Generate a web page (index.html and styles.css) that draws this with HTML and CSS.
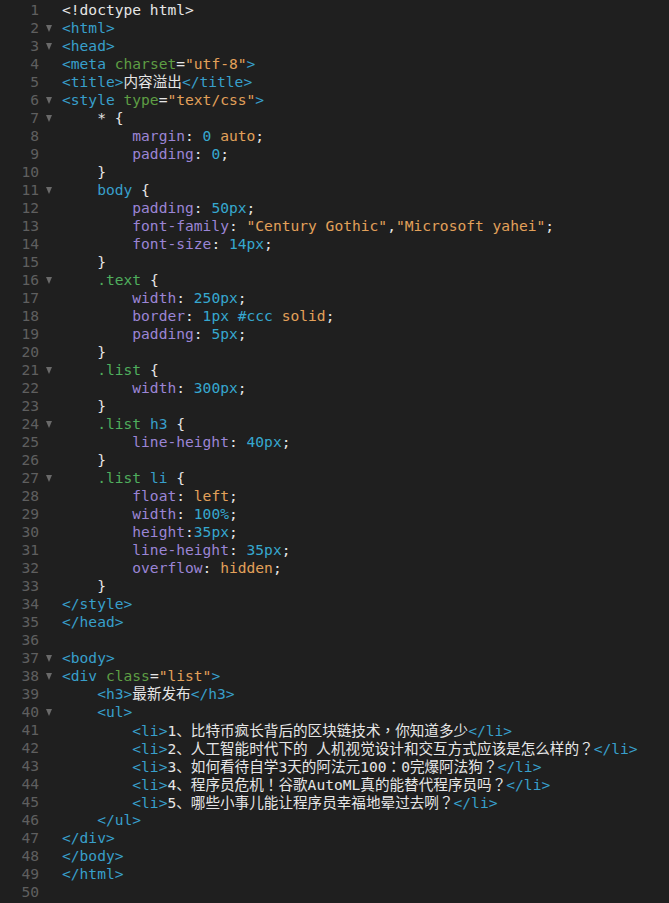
FILE: index.html
```html
<!DOCTYPE html>
<html lang="zh-CN">
<head>
<meta charset="utf-8">
<title>editor</title>
<link rel="stylesheet" href="styles.css">
</head>
<body>
<div class="editor">
<div class="line"><span class="ln">1</span><span class="fold"></span><span class="code">&lt;!doctype html&gt;</span></div>
<div class="line"><span class="ln">2</span><span class="fold on"></span><span class="code"><span class="t">&lt;html&gt;</span></span></div>
<div class="line"><span class="ln">3</span><span class="fold on"></span><span class="code"><span class="t">&lt;head&gt;</span></span></div>
<div class="line"><span class="ln">4</span><span class="fold"></span><span class="code"><span class="t">&lt;meta</span> <span class="a">charset</span>=<span class="s">"utf-8"</span><span class="t">&gt;</span></span></div>
<div class="line"><span class="ln">5</span><span class="fold"></span><span class="code"><span class="t">&lt;title&gt;</span>内容溢出<span class="t">&lt;/title&gt;</span></span></div>
<div class="line"><span class="ln">6</span><span class="fold on"></span><span class="code"><span class="t">&lt;style</span> <span class="a">type</span>=<span class="s">"text/css"</span><span class="t">&gt;</span></span></div>
<div class="line"><span class="ln">7</span><span class="fold on"></span><span class="code">    * {</span></div>
<div class="line"><span class="ln">8</span><span class="fold"></span><span class="code">        <span class="p">margin</span>: <span class="n">0</span> <span class="s">auto</span>;</span></div>
<div class="line"><span class="ln">9</span><span class="fold"></span><span class="code">        <span class="p">padding</span>: <span class="n">0</span>;</span></div>
<div class="line"><span class="ln">10</span><span class="fold"></span><span class="code">    }</span></div>
<div class="line"><span class="ln">11</span><span class="fold on"></span><span class="code">    <span class="t">body</span> {</span></div>
<div class="line"><span class="ln">12</span><span class="fold"></span><span class="code">        <span class="p">padding</span>: <span class="n">50px</span>;</span></div>
<div class="line"><span class="ln">13</span><span class="fold"></span><span class="code">        <span class="p">font-family</span>: <span class="s">"Century Gothic"</span>,<span class="s">"Microsoft yahei"</span>;</span></div>
<div class="line"><span class="ln">14</span><span class="fold"></span><span class="code">        <span class="p">font-size</span>: <span class="n">14px</span>;</span></div>
<div class="line"><span class="ln">15</span><span class="fold"></span><span class="code">    }</span></div>
<div class="line"><span class="ln">16</span><span class="fold on"></span><span class="code">    <span class="c">.text</span> {</span></div>
<div class="line"><span class="ln">17</span><span class="fold"></span><span class="code">        <span class="p">width</span>: <span class="n">250px</span>;</span></div>
<div class="line"><span class="ln">18</span><span class="fold"></span><span class="code">        <span class="p">border</span>: <span class="n">1px</span> <span class="n">#ccc</span> <span class="s">solid</span>;</span></div>
<div class="line"><span class="ln">19</span><span class="fold"></span><span class="code">        <span class="p">padding</span>: <span class="n">5px</span>;</span></div>
<div class="line"><span class="ln">20</span><span class="fold"></span><span class="code">    }</span></div>
<div class="line"><span class="ln">21</span><span class="fold on"></span><span class="code">    <span class="c">.list</span> {</span></div>
<div class="line"><span class="ln">22</span><span class="fold"></span><span class="code">        <span class="p">width</span>: <span class="n">300px</span>;</span></div>
<div class="line"><span class="ln">23</span><span class="fold"></span><span class="code">    }</span></div>
<div class="line"><span class="ln">24</span><span class="fold on"></span><span class="code">    <span class="c">.list</span> <span class="t">h3</span> {</span></div>
<div class="line"><span class="ln">25</span><span class="fold"></span><span class="code">        <span class="p">line-height</span>: <span class="n">40px</span>;</span></div>
<div class="line"><span class="ln">26</span><span class="fold"></span><span class="code">    }</span></div>
<div class="line"><span class="ln">27</span><span class="fold on"></span><span class="code">    <span class="c">.list</span> <span class="t">li</span> {</span></div>
<div class="line"><span class="ln">28</span><span class="fold"></span><span class="code">        <span class="p">float</span>: <span class="s">left</span>;</span></div>
<div class="line"><span class="ln">29</span><span class="fold"></span><span class="code">        <span class="p">width</span>: <span class="n">100%</span>;</span></div>
<div class="line"><span class="ln">30</span><span class="fold"></span><span class="code">        <span class="p">height</span>:<span class="n">35px</span>;</span></div>
<div class="line"><span class="ln">31</span><span class="fold"></span><span class="code">        <span class="p">line-height</span>: <span class="n">35px</span>;</span></div>
<div class="line"><span class="ln">32</span><span class="fold"></span><span class="code">        <span class="p">overflow</span>: <span class="s">hidden</span>;</span></div>
<div class="line"><span class="ln">33</span><span class="fold"></span><span class="code">    }</span></div>
<div class="line"><span class="ln">34</span><span class="fold"></span><span class="code"><span class="t">&lt;/style&gt;</span></span></div>
<div class="line"><span class="ln">35</span><span class="fold"></span><span class="code"><span class="t">&lt;/head&gt;</span></span></div>
<div class="line"><span class="ln">36</span><span class="fold"></span><span class="code"></span></div>
<div class="line"><span class="ln">37</span><span class="fold on"></span><span class="code"><span class="t">&lt;body&gt;</span></span></div>
<div class="line"><span class="ln">38</span><span class="fold on"></span><span class="code"><span class="t">&lt;div</span> <span class="a">class</span>=<span class="s">"list"</span><span class="t">&gt;</span></span></div>
<div class="line"><span class="ln">39</span><span class="fold"></span><span class="code">    <span class="t">&lt;h3&gt;</span>最新发布<span class="t">&lt;/h3&gt;</span></span></div>
<div class="line"><span class="ln">40</span><span class="fold on"></span><span class="code">    <span class="t">&lt;ul&gt;</span></span></div>
<div class="line"><span class="ln">41</span><span class="fold"></span><span class="code">        <span class="t">&lt;li&gt;</span>1、比特币疯长背后的区块链技术<span class="pu" lang="zh-Hant">，</span>你知道多少<span class="t">&lt;/li&gt;</span></span></div>
<div class="line"><span class="ln">42</span><span class="fold"></span><span class="code">        <span class="t">&lt;li&gt;</span>2、人工智能时代下的 人机视觉设计和交互方式应该是怎么样的<span class="pu" lang="zh-Hant">？</span><span class="t">&lt;/li&gt;</span></span></div>
<div class="line"><span class="ln">43</span><span class="fold"></span><span class="code">        <span class="t">&lt;li&gt;</span>3、如何看待自学3天的阿法元100<span class="pu" lang="zh-Hant">：</span>0完爆阿法狗<span class="pu" lang="zh-Hant">？</span><span class="t">&lt;/li&gt;</span></span></div>
<div class="line"><span class="ln">44</span><span class="fold"></span><span class="code">        <span class="t">&lt;li&gt;</span>4、程序员危机<span class="pu" lang="zh-Hant">！</span>谷歌AutoML真的能替代程序员吗<span class="pu" lang="zh-Hant">？</span><span class="t">&lt;/li&gt;</span></span></div>
<div class="line"><span class="ln">45</span><span class="fold"></span><span class="code">        <span class="t">&lt;li&gt;</span>5、哪些小事儿能让程序员幸福地晕过去咧<span class="pu" lang="zh-Hant">？</span><span class="t">&lt;/li&gt;</span></span></div>
<div class="line"><span class="ln">46</span><span class="fold"></span><span class="code">    <span class="t">&lt;/ul&gt;</span></span></div>
<div class="line"><span class="ln">47</span><span class="fold"></span><span class="code"><span class="t">&lt;/div&gt;</span></span></div>
<div class="line"><span class="ln">48</span><span class="fold"></span><span class="code"><span class="t">&lt;/body&gt;</span></span></div>
<div class="line"><span class="ln">49</span><span class="fold"></span><span class="code"><span class="t">&lt;/html&gt;</span></span></div>
<div class="line"><span class="ln">50</span><span class="fold"></span><span class="code"></span></div>
</div>
</body>
</html>
```
FILE: styles.css
```css
html, body {
  margin: 0;
  padding: 0;
  background: #1f1f1f;
}
.editor {
  width: 669px;
  height: 903px;
  padding-top: 1px;
  box-sizing: border-box;
  background: #1f1f1f;
  font-family: "DejaVu Sans Mono", "Noto Sans CJK SC", monospace;
  font-size: 14.6px;
  color: #e6e6e6;
  overflow: hidden;
}
.line {
  display: flex;
  height: 18px;
  line-height: 18px;
}
.ln {
  width: 39px;
  flex: none;
  text-align: right;
  color: #5f5f5f;
}
.fold {
  width: 23px;
  flex: none;
  display: flex;
  align-items: center;
}
.fold.on::before {
  content: "";
  margin-left: 7px;
  width: 0;
  height: 0;
  border-left: 3.5px solid transparent;
  border-right: 3.5px solid transparent;
  border-top: 7px solid #6a6a6a;
}
.code {
  white-space: pre;
}
.pu {
  font-family: "Noto Sans CJK TC", sans-serif;
}
.t { color: #389fcb; }
.a { color: #5e9e44; }
.s { color: #e3a15a; }
.p { color: #9b85d6; }
.n { color: #36a8cf; }
.c { color: #4fae5d; }
```
